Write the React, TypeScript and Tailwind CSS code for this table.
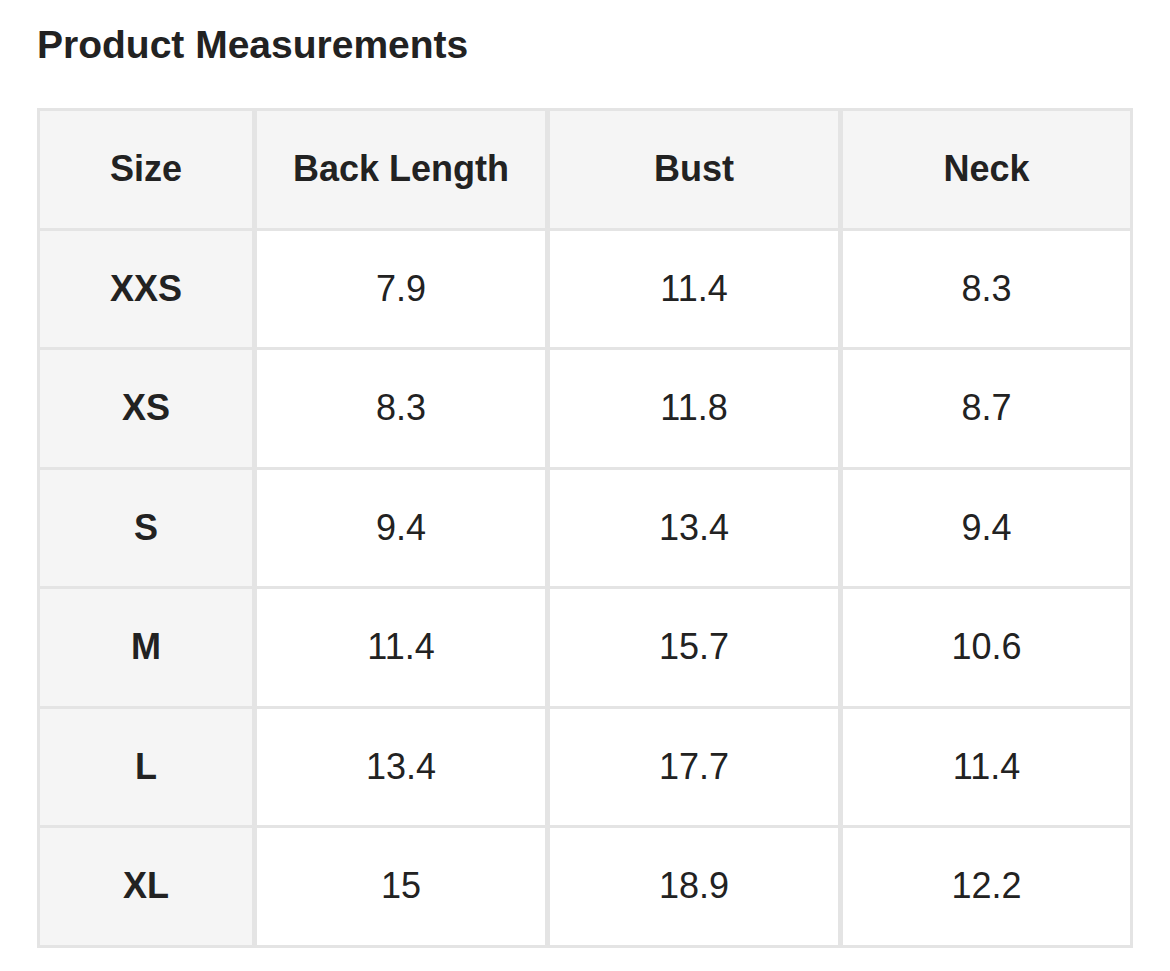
import React from "react";

const headers = ["Size", "Back Length", "Bust", "Neck"];

const rows = [
  ["XXS", "7.9", "11.4", "8.3"],
  ["XS", "8.3", "11.8", "8.7"],
  ["S", "9.4", "13.4", "9.4"],
  ["M", "11.4", "15.7", "10.6"],
  ["L", "13.4", "17.7", "11.4"],
  ["XL", "15", "18.9", "12.2"],
];

export default function App() {
  return (
    <div
      className="min-h-screen bg-white text-[#222222] pl-[37px] pt-[25px]"
      style={{ fontFamily: '"Liberation Sans", Arial, sans-serif' }}
    >
      <h1 className="text-[39px] leading-[39px] font-bold">Product Measurements</h1>

      {/* table */}
      <div className="mt-[44px] w-[1096px] grid grid-cols-[212px_288px_288px_287px] gap-x-[5px] gap-y-[3px] p-[3px] bg-[#e4e4e4]">
        {headers.map((h) => (
          <div
            key={h}
            className="h-[116.5px] flex items-center justify-center bg-[#f5f5f5] text-[36px] font-bold"
          >
            {h}
          </div>
        ))}
        {rows.map((r) =>
          r.map((cell, i) => (
            <div
              key={r[0] + i}
              className={`h-[116.5px] flex items-center justify-center text-[36px] ${
                i === 0 ? "bg-[#f5f5f5] font-bold" : "bg-white"
              }`}
            >
              {cell}
            </div>
          ))
        )}
      </div>
    </div>
  );
}
